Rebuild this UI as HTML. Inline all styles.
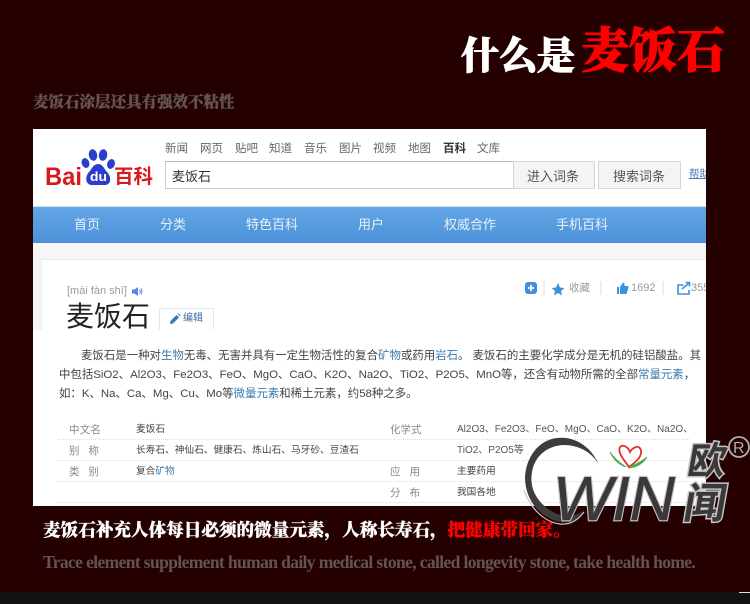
<!DOCTYPE html>
<html><head><meta charset="utf-8">
<style>
html,body{margin:0;padding:0}
body{width:750px;height:604px;overflow:hidden;background:#250000;position:relative;font-family:"Liberation Sans","Noto Sans CJK SC",sans-serif}
body>*{filter:blur(.3px)}
.t{position:absolute;white-space:nowrap;line-height:1}
.s{font-family:"Liberation Serif","Noto Serif CJK SC",serif;font-weight:900}
.b{position:absolute}
a{color:#3a7ab0;text-decoration:none}
.top{font-size:11.5px;color:#666;top:144px}
.nav{font-size:13px;color:#e8f2fb;top:218px}
.p{font-size:11.43px;color:#444;left:59px}
.tl{font-size:10.5px;color:#888}
.tv{font-size:10.5px;color:#444}
.dot{position:absolute;left:58px;width:632px;border-top:1px dotted #ddd;height:0}
</style></head><body>
<div class="b" style="left:0;top:592px;width:750px;height:12px;background:#111"></div>
<div class="b" style="left:739px;top:592px;width:11px;height:1px;background:#ddd"></div>

<div class="t s" style="left:461px;top:38px;font-size:38px;color:#fff;-webkit-text-stroke:.9px #fff">什么是</div>
<div class="t s" style="left:581px;top:28px;font-size:48px;color:#f00;-webkit-text-stroke:1.2px #f00">麦饭石</div>
<div class="t s" style="left:33px;top:95px;font-size:15.5px;color:#635353;-webkit-text-stroke:.35px #635353">麦饭石涂层还具有强效不粘性</div>

<div class="b" style="left:33px;top:129px;width:673px;height:377px;background:#fff;overflow:hidden"></div>

<svg class="b" style="left:40px;top:145px" width="120" height="45" viewBox="0 0 120 45">
<text x="5" y="40" font-family="Liberation Sans" font-weight="700" font-size="25" fill="#d8181c" textLength="37" lengthAdjust="spacingAndGlyphs">Bai</text>
<ellipse cx="53" cy="10" rx="4.2" ry="5.8" fill="#2b3dcc" transform="rotate(-10 53 10)"/>
<ellipse cx="63" cy="10" rx="4.2" ry="5.8" fill="#2b3dcc" transform="rotate(8 63 10)"/>
<ellipse cx="45.500" cy="18" rx="3.8" ry="5" fill="#2b3dcc" transform="rotate(-20 45.500 18)"/>
<ellipse cx="71" cy="19" rx="3.8" ry="5" fill="#2b3dcc" transform="rotate(20 71 19)"/>
<path d="M58 19C53 19 52 24 49 27C45 31 45 40 52 40L65 40C71 40 72 32 67 27C64 24 63 19 58 19Z" fill="#2b3dcc"/>
<text x="50" y="36" font-family="Liberation Sans" font-weight="700" font-size="13" fill="#fff" textLength="17" lengthAdjust="spacingAndGlyphs">du</text>
</svg>
<div class="t" style="left:114px;top:168px;font-size:19.5px;font-weight:700;color:#d8181c;font-family:'Liberation Sans','Noto Sans CJK SC',sans-serif">百科</div>

<div class="t top" style="left:165px">新闻</div>
<div class="t top" style="left:200px">网页</div>
<div class="t top" style="left:235px">贴吧</div>
<div class="t top" style="left:269px">知道</div>
<div class="t top" style="left:304px">音乐</div>
<div class="t top" style="left:339px">图片</div>
<div class="t top" style="left:373px">视频</div>
<div class="t top" style="left:408px">地图</div>
<div class="t top" style="left:443px;font-weight:700;color:#333">百科</div>
<div class="t top" style="left:477px">文库</div>

<div class="b" style="left:165px;top:161px;width:347px;height:26px;border:1px solid #ccc;border-top-color:#bbb"></div>
<div class="t" style="left:172px;top:170px;font-size:13px;color:#333">麦饭石</div>
<div class="b" style="left:513px;top:161px;width:80px;height:26px;border:1px solid #d5d5d5;background:#f4f4f4"></div>
<div class="b" style="left:598px;top:161px;width:81px;height:26px;border:1px solid #d5d5d5;background:#f4f4f4"></div>
<div class="t" style="left:527px;top:170px;font-size:13px;color:#555">进入词条</div>
<div class="t" style="left:613px;top:170px;font-size:13px;color:#555">搜索词条</div>
<div class="b" style="left:689px;top:168px;width:17px;height:14px;overflow:hidden"><div class="t" style="left:0;top:1px;font-size:10.5px;color:#4a7db5;text-decoration:underline">帮助</div></div>

<div class="b" style="left:33px;top:206px;width:673px;height:37px;background:linear-gradient(#64a6e6,#4b90d8);border-top:1px solid #cfe0f0;box-sizing:border-box"></div>
<div class="t nav" style="left:74px">首页</div>
<div class="t nav" style="left:160px">分类</div>
<div class="t nav" style="left:246px">特色百科</div>
<div class="t nav" style="left:358px">用户</div>
<div class="t nav" style="left:444px">权威合作</div>
<div class="t nav" style="left:556px">手机百科</div>

<div class="b" style="left:33px;top:243px;width:673px;height:90px;background:#f6f6f6"></div>
<div class="b" style="left:41px;top:259px;width:665px;height:75px;background:#fff;border:1px solid #ececec;border-right:0;border-bottom:0;box-sizing:border-box"></div>

<div class="t" style="left:67px;top:286px;font-size:11px;color:#999">[mài fàn shī]</div>
<svg class="b" style="left:132px;top:286px" width="11" height="11" viewBox="0 0 11 11"><path d="M0 3.5H2.5L6 1V10L2.5 7.5H0Z" fill="#5585dc"/><path d="M7.5 3.5Q9 5.5 7.5 7.5M9 2.5Q11 5.5 9 8.5" fill="none" stroke="#5585dc" stroke-width="1"/></svg>
<div class="t" style="left:66px;top:303px;font-size:28px;color:#222">麦饭石</div>
<div class="b" style="left:159px;top:308px;width:53px;height:22px;border:1px solid #e8e8e8;border-radius:2px"></div>
<svg class="b" style="left:169px;top:313px" width="12" height="12" viewBox="0 0 12 12"><path d="M1 11L1.5 8L7.5 2L10 4.5L4 10.5Z" fill="#3a7ab0"/><path d="M8.5 1L9.5 0.5L11.5 2.5L11 3.5Z" fill="#3a7ab0"/></svg>
<div class="t" style="left:183px;top:314px;font-size:10px;color:#3a6ea5">编辑</div>

<svg class="b" style="left:524px;top:280px" width="190" height="18" viewBox="0 0 190 18">
<rect x="1" y="2" width="12" height="12" rx="3" fill="#3f8fe0"/><path d="M7 5V11M4 8H10" stroke="#fff" stroke-width="1.8"/>
<path d="M20 1V15" stroke="#ddd"/>
<path d="M34 3L36 7.5L40.5 8L37 11L38 15.5L34 13L30 15.5L31 11L27.500 8L32 7.500Z" fill="#3f8fe0"/>
<path d="M77 1V15M139 1V15" stroke="#ddd"/>
<path d="M93 7H95V14H93ZM96 7L99 2.500Q101 3 100.500 6H104Q105 7 104 9L102.500 14H96Z" fill="#3f8fe0"/>
<path d="M159.500 5H154V14H165V10" fill="none" stroke="#3f8fe0" stroke-width="1.600"/>
<path d="M158 9L165 3M161.500 2.500H165.500V6.500" fill="none" stroke="#3f8fe0" stroke-width="1.600"/>
</svg>
<div class="t" style="left:569px;top:283px;font-size:10.500px;color:#999">收藏</div>
<div class="t" style="left:631px;top:283px;font-size:11px;color:#999">1692</div>
<div class="b" style="left:691px;top:281px;width:15px;height:16px;overflow:hidden"><div class="t" style="left:0;top:2px;font-size:11px;color:#999">355</div></div>

<div class="b" style="left:33px;top:330px;width:673px;height:176px;background:#fff"></div>

<div class="t p" style="left:81px;top:351px">麦饭石是一种对<a>生物</a>无毒、无害并具有一定生物活性的复合<a>矿物</a>或药用<a>岩石</a>。 麦饭石的主要化学成分是无机的硅铝酸盐。其</div>
<div class="t p" style="top:370px">中包括SiO2、Al2O3、Fe2O3、FeO、MgO、CaO、K2O、Na2O、TiO2、P2O5、MnO等，还含有动物所需的全部<a>常量元素</a>，</div>
<div class="t p" style="top:389px">如：K、Na、Ca、Mg、Cu、Mo等<a>微量元素</a>和稀土元素，约58种之多。</div>

<div class="t tl" style="left:69px;top:425px;letter-spacing:.2px">中文名</div>
<div class="t tv" style="left:136px;top:425px;font-size:9.700px">麦饭石</div>
<div class="t tl" style="left:390px;top:425px">化学式</div>
<div class="t tv" style="left:457px;top:425px;font-size:10px;color:#555">Al2O3、Fe2O3、FeO、MgO、CaO、K2O、Na2O、</div>
<div class="dot" style="top:439px"></div>
<div class="t tl" style="left:69px;top:446px;letter-spacing:9px">别称</div>
<div class="t tv" style="left:136px;top:446px;font-size:9.700px">长寿石、神仙石、健康石、炼山石、马牙砂、豆渣石</div>
<div class="t tv" style="left:457px;top:446px;font-size:10px;color:#555">TiO2、P2O5等</div>
<div class="dot" style="top:460px"></div>
<div class="t tl" style="left:69px;top:467px;letter-spacing:9px">类别</div>
<div class="t tv" style="left:136px;top:467px;font-size:9.700px">复合<a>矿物</a></div>
<div class="t tl" style="left:390px;top:467px;letter-spacing:9px">应用</div>
<div class="t tv" style="left:457px;top:467px;font-size:9.700px">主要药用</div>
<div class="dot" style="top:481px"></div>
<div class="t tl" style="left:390px;top:488px;letter-spacing:9px">分布</div>
<div class="t tv" style="left:457px;top:488px;font-size:9.700px">我国各地</div>
<div class="dot" style="top:502px"></div>

<div class="t s" style="left:43px;top:522px;font-size:17.600px;color:#fff;-webkit-text-stroke:.35px #fff">麦饭石补充人体每日必须的微量元素，人称长寿石，<span style="color:#f00;-webkit-text-stroke:.35px #f00">把健康带回家。</span></div>
<div class="t" style="left:43px;top:554px;font-family:'Liberation Serif',serif;font-weight:700;font-size:17.500px;color:#635353;letter-spacing:-.62px">Trace element supplement human daily medical stone, called longevity stone, take health home.</div>

<svg class="b" style="left:500px;top:420px" width="250" height="120" viewBox="500 420 250 120">
<path d="M598 463C590 445 573 436 557 438C538 440 526 458 525 477C525 500 540 518 560 522C570 524 578 520 584 510C576 517 564 518 553 512C537 503 529 488 532 472C535 455 548 446 563 445C578 445 590 451 598 463Z" fill="#3e3c3c"/>
<path d="M524 490C530 508 544 522 560 524C570 525 578 520 584 512" fill="none" stroke="#c8c8c8" stroke-width="1.200"/>
<g font-family="Liberation Sans" font-style="italic">
<text x="553" y="520" font-size="62" textLength="122" lengthAdjust="spacingAndGlyphs" fill="none" stroke="#c6c4c4" stroke-width="2.800">WIN</text>
<text x="553" y="520" font-size="62" textLength="122" lengthAdjust="spacingAndGlyphs" fill="#3a3838" stroke="#3a3838" stroke-width=".6">WIN</text>
</g>
<path d="M620 447C624 443 629 449 630 452C633 447 640 444 641 451C642 458 634 463 629 467C625 461 617 453 620 447Z" fill="none" stroke="#e0332f" stroke-width="1.800"/>
<path d="M610 452C614 458 620 463 626 467C619 465 613 459 610 452Z" fill="#4cab4a" stroke="#4cab4a" stroke-width=".8"/>
<path d="M647 457C641 462 634 465 628 468C635 468 643 464 647 457Z" fill="#4cab4a" stroke="#4cab4a" stroke-width=".8"/>
<g font-family="Liberation Sans,Noto Sans CJK SC" font-weight="700">
<text transform="translate(686 474) skewX(-10)" font-size="38" fill="none" stroke="#c6c4c4" stroke-width="3">欧</text>
<text transform="translate(682 518) skewX(-10)" font-size="42" fill="none" stroke="#c6c4c4" stroke-width="3">闻</text>
<text transform="translate(686 474) skewX(-10)" font-size="38" fill="#3a3838">欧</text>
<text transform="translate(682 518) skewX(-10)" font-size="42" fill="#3a3838">闻</text>
</g>
<circle cx="739" cy="447" r="10" fill="none" stroke="#b0aeae" stroke-width="1.800"/>
<text x="733" y="453" font-family="Liberation Sans" font-size="16" fill="#b0aeae">R</text>
</svg>
</body></html>
